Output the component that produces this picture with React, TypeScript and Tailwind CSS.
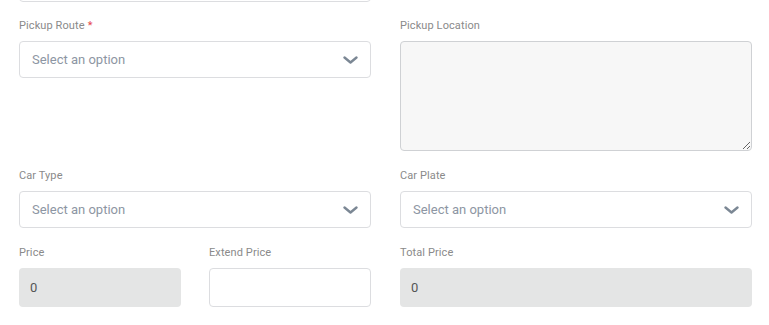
import React from "react";

const Label: React.FC<{ text: string; required?: boolean }> = ({ text, required }) => (
  <label className="block text-[11px] leading-[17px] text-[#8a8a8a] mb-[7px] tracking-[0.1px]">
    {text}
    {required && <span className="text-[#e5484d] ml-[3px]">*</span>}
  </label>
);

const Chevron: React.FC = () => (
  <svg width="15" height="8" viewBox="0 0 15 8" fill="none" className="shrink-0">
    <path d="M1.5 1.5L7.5 6.5L13.5 1.5" stroke="#7b8794" strokeWidth="2.4" strokeLinecap="round" strokeLinejoin="round" />
  </svg>
);

const SelectBox: React.FC = () => (
  <div className="h-[37px] flex items-center justify-between pl-[12px] pr-[12px] border border-[#dcdde0] rounded-[4px] bg-white">
    <span className="text-[13px] text-[#8d96a3]">Select an option</span>
    <Chevron />
  </div>
);

const ReadOnlyBox: React.FC<{ value: string }> = ({ value }) => (
  <div className="h-[39px] flex items-center px-[11px] rounded-[4px] bg-[#e4e5e5] text-[13px] text-[#555]">
    {value}
  </div>
);

export default function App() {
  return (
    <div className="w-[769px] h-[325px] bg-white overflow-hidden pl-[19px] pr-[17px]" style={{ fontFamily: "Roboto, 'Liberation Sans', sans-serif" }}>
      <div className="grid grid-cols-2 gap-x-[29px]">
        <div className="-mt-[36px] h-[38px] border border-[#dcdde0] rounded-[4px]" />
        <div />
      </div>

      <div className="grid grid-cols-2 gap-x-[29px] gap-y-[16px] mt-[15px]">
        <div>
          <Label text="Pickup Route" required />
          <SelectBox />
        </div>
        <div>
          <Label text="Pickup Location" />
          <textarea className="block w-full h-[110px] rounded-[4px] border border-[#cfd1d4] bg-[#f7f7f7] outline-none" />
        </div>

        <div>
          <Label text="Car Type" />
          <SelectBox />
        </div>
        <div>
          <Label text="Car Plate" />
          <SelectBox />
        </div>

        <div className="grid grid-cols-2 gap-x-[28px]">
          <div>
            <Label text="Price" />
            <ReadOnlyBox value="0" />
          </div>
          <div>
            <Label text="Extend Price" />
            <div className="h-[39px] rounded-[4px] border border-[#dcdde0] bg-white" />
          </div>
        </div>
        <div>
          <Label text="Total Price" />
          <ReadOnlyBox value="0" />
        </div>
      </div>
    </div>
  );
}
